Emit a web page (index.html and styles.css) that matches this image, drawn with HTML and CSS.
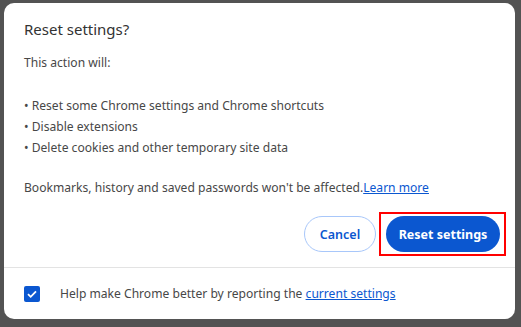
FILE: index.html
```html
<!DOCTYPE html>
<html lang="en">
<head>
  <meta charset="UTF-8">
  <title>Reset settings?</title>
  <link rel="stylesheet" href="styles.css">
</head>
<body>

  <div class="dialog">
    <div class="dialog-body">
      <h1>Reset settings?</h1>
      <p class="intro">This action will:</p>

      <ul class="actions">
        <li>Reset some Chrome settings and Chrome shortcuts</li>
        <li>Disable extensions</li>
        <li>Delete cookies and other temporary site data</li>
      </ul>

      <p class="note">Bookmarks, history and saved passwords won't be affected.<a href="#">Learn more</a></p>

      <!-- Buttons -->
      <div class="buttons">
        <button class="btn btn-cancel">Cancel</button>
        <div class="highlight">
          <button class="btn btn-reset">Reset settings</button>
        </div>
      </div>
    </div>

    <!-- Footer -->
    <div class="dialog-footer">
      <span class="checkbox">
        <svg width="16" height="16" viewBox="0 0 16 16">
          <rect width="16" height="16" rx="2" fill="#0b57d0"/>
          <path d="M4 8.2 L6.7 10.8 L12 5.4" fill="none" stroke="#fff" stroke-width="1.8"/>
        </svg>
      </span>
      <span class="footer-text">Help make Chrome better by reporting the <a href="#">current settings</a></span>
    </div>
  </div>

</body>
</html>
```

FILE: styles.css
```css
/* Global Styles */
body {
  font-family: 'Noto Sans', 'Open Sans', sans-serif;
  background-color: #535353;
  color: #474747;
  margin: 0;
  padding: 3px 6px 8px 4px;
}

a {
  color: #0b57d0;
}

/* Dialog */
.dialog {
  background-color: #ffffff;
  border-radius: 10px;
  height: 316px;
  display: flex;
  flex-direction: column;
  overflow: hidden;
}

.dialog-body {
  padding: 16px 20px 0 20px;
}

h1 {
  font-size: 15px;
  font-weight: normal;
  color: #333;
  margin: 0;
  line-height: 20px;
}

.intro {
  font-size: 12.1px;
  margin: 13px 0 0 0;
  line-height: 21px;
}

.actions {
  list-style: none;
  margin: 22px 0 0 0;
  padding: 0;
  font-size: 12.1px;
  line-height: 21px;
}

.actions li::before {
  content: "• ";
}

.note {
  font-size: 12.1px;
  line-height: 21px;
  margin: 19px 0 0 0;
}

/* Buttons */
.buttons {
  display: flex;
  justify-content: flex-end;
  align-items: center;
  gap: 3px;
  margin-top: 14px;
  margin-right: -11px;
}

.btn {
  font-family: 'Noto Sans', 'Open Sans', sans-serif;
  font-size: 12.5px;
  font-weight: 600;
  height: 36px;
  border-radius: 18px;
  cursor: pointer;
  white-space: nowrap;
}

.btn-cancel {
  background: #ffffff;
  border: 1px solid #a8c7fa;
  color: #0b57d0;
  width: 72px;
  padding: 0;
}

.highlight {
  border: 2px solid #f00;
  padding: 2px 4px 2px 5px;
}

.btn-reset {
  display: block;
  background-color: #0b57d0;
  border: none;
  color: #ffffff;
  font-weight: 700;
  padding: 0;
  width: 114px;
}

/* Footer */
.dialog-footer {
  margin-top: auto;
  border-top: 1px solid #e3e3e3;
  height: 51px;
  display: flex;
  align-items: center;
  padding: 0 20px;
  gap: 20px;
  font-size: 12.1px;
}

.checkbox {
  display: flex;
}
```
